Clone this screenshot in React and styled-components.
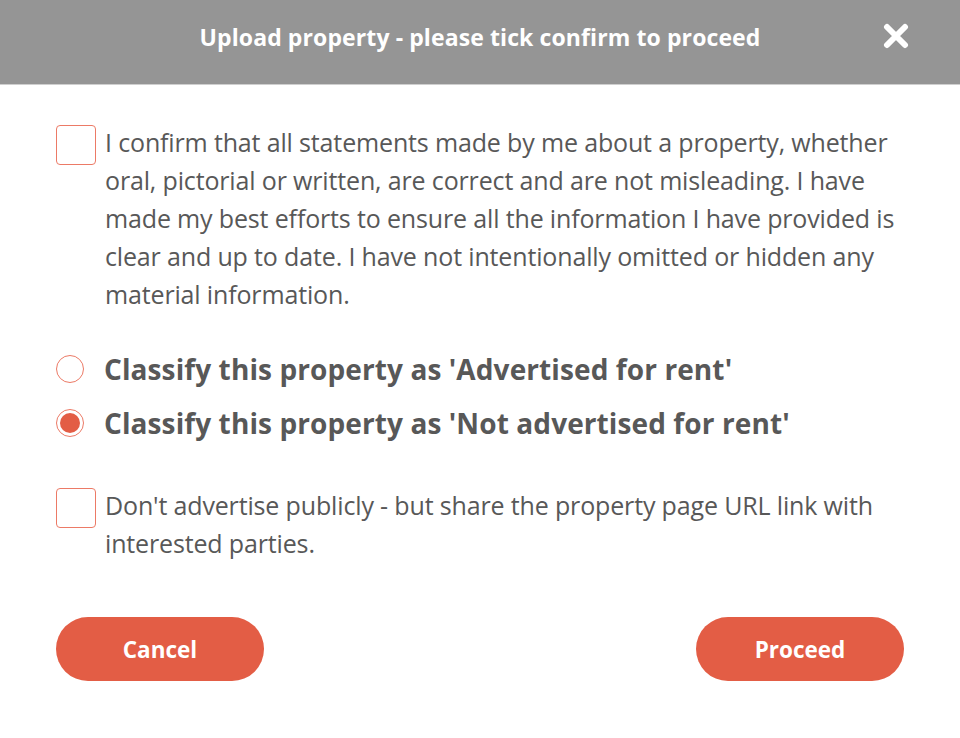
import React, { useState } from "react";
import styled, { createGlobalStyle } from "styled-components";

const Global = createGlobalStyle`
  html, body { margin: 0; padding: 0; background: #fff; }
  body { font-family: "Open Sans", "Noto Sans", sans-serif; }
`;

const ACCENT = "#e35d45";

const Page = styled.div`
  width: 960px;
  min-height: 738px;
  background: #fff;
`;

const Header = styled.header`
  height: 84px;
  background: #959595;
  border-bottom: 1px solid #cfcfcf;
  display: flex;
  align-items: center;
  justify-content: center;
  position: relative;
`;

const Title = styled.h1`
  margin: 0;
  margin-top: -10px;
  color: #fff;
  font-size: 23px;
  font-weight: 700;
  letter-spacing: 0.1px;
`;

const Close = styled.button`
  position: absolute;
  right: 50px;
  top: 22px;
  width: 28px;
  height: 28px;
  border: 0;
  padding: 0;
  background: transparent;
  display: flex;
  align-items: center;
  justify-content: center;
`;

const Body = styled.div`
  padding: 38px 56px 0;
  display: flex;
  flex-direction: column;
`;

const CheckRow = styled.label`
  display: flex;
  gap: 9px;
  align-items: flex-start;
`;

const Box = styled.span`
  flex: none;
  width: 38px;
  height: 38px;
  border: 1px solid #ec7a66;
  border-radius: 4px;
  margin-top: 2px;
  box-sizing: content-box;
`;

const Para = styled.p`
  margin: 0;
  color: #585858;
  font-size: 25px;
  line-height: 38px;
  letter-spacing: -0.15px;
`;

const RadioRow = styled.label`
  display: flex;
  align-items: center;
  gap: 20px;
  height: 54px;
`;

const Circle = styled.span`
  flex: none;
  width: 28px;
  height: 28px;
  border-radius: 50%;
  border: 1px solid #ec7a66;
  box-sizing: border-box;
  display: flex;
  align-items: center;
  justify-content: center;
  &::after {
    content: "";
    width: 20px;
    height: 20px;
    border-radius: 50%;
    background: ${(p) => (p.$on ? ACCENT : "transparent")};
  }
`;

const RadioText = styled.span`
  color: #585858;
  font-size: 28px;
  font-weight: 700;
  letter-spacing: 0.1px;
`;

const Radios = styled.div`
  display: flex;
  flex-direction: column;
  margin-top: 29px;
  margin-bottom: 36px;
`;

const Footer = styled.div`
  display: flex;
  justify-content: space-between;
  margin-top: 55px;
`;

const Btn = styled.button`
  width: 208px;
  height: 64px;
  border-radius: 32px;
  border: 0;
  background: ${ACCENT};
  color: #fff;
  font-family: inherit;
  font-size: 22.5px;
  font-weight: 700;
`;

export default function App() {
  const [sel, setSel] = useState(1);
  return (
    <Page>
      <Global />
      <Header>
        <Title>Upload property - please tick confirm to proceed</Title>
        <Close aria-label="close">
          <svg width="26" height="26" viewBox="0 0 26 26">
            <path d="M4 4 L22 22 M22 4 L4 22" stroke="#fff" strokeWidth="6" strokeLinecap="round" />
          </svg>
        </Close>
      </Header>
      <Body>
        <CheckRow>
          <Box />
          <Para>
            I confirm that all statements made by me about a property, whether oral, pictorial or written, are correct and are not misleading. I have made my best efforts to ensure all the information I have provided is clear and up to date. I have not intentionally omitted or hidden any material information.
          </Para>
        </CheckRow>
        <Radios>
          <RadioRow onClick={() => setSel(0)}>
            <Circle $on={sel === 0} />
            <RadioText>Classify this property as 'Advertised for rent'</RadioText>
          </RadioRow>
          <RadioRow onClick={() => setSel(1)}>
            <Circle $on={sel === 1} />
            <RadioText>Classify this property as 'Not advertised for rent'</RadioText>
          </RadioRow>
        </Radios>
        <CheckRow>
          <Box />
          <Para>
            Don't advertise publicly - but share the property page URL link with interested parties.
          </Para>
        </CheckRow>
        <Footer>
          <Btn>Cancel</Btn>
          <Btn>Proceed</Btn>
        </Footer>
      </Body>
    </Page>
  );
}
